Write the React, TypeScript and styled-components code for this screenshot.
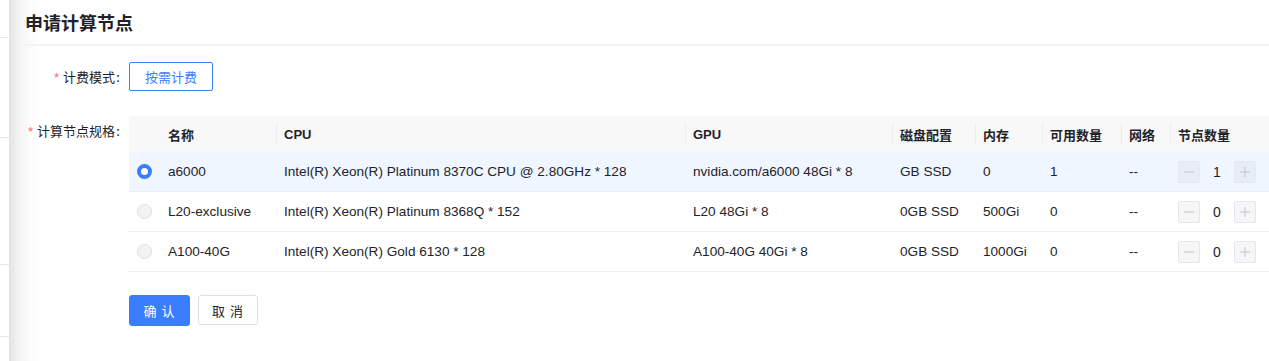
import React from 'react'
import styled, { createGlobalStyle } from 'styled-components';

const GlobalStyle = createGlobalStyle`
  html, body {
    margin: 0;
    padding: 0;
    background: #fff;
  }
  body {
    font-family: "Liberation Sans", "Noto Sans CJK SC", sans-serif;
    font-size: 13px;
    color: #1f2329;
  }
`;

const COLS = '31px 116px 409px 207px 83px 67px 79px 49px 99px';

const Screen = styled.div`
  display: flex;
  width: 1269px;
  height: 361px;
  overflow: hidden;
`;

const BackPage = styled.div`
  width: 9px;
  flex-shrink: 0;
  display: flex;
  flex-direction: column;
  background: #fff;
`;

const BackLine = styled.div<{ $h: number }>`
  height: ${p => p.$h}px;
  box-sizing: border-box;
  border-bottom: 1px solid #e6e6e6;
`;

const Drawer = styled.div`
  flex: 1;
  min-width: 0;
  padding-left: 16px;
  background: linear-gradient(to right, #e3e3e3 0px, #f1f1f1 8px, #fbfbfb 20px, #fff 32px);
  display: flex;
  flex-direction: column;
`;

const Header = styled.div`
  height: 44px;
  display: flex;
  align-items: center;
  border-bottom: 2px solid #f2f3f5;
`;

const Title = styled.h2`
  margin: 0;
  font-family: "Noto Sans CJK SC", sans-serif;
  font-size: 18px;
  font-weight: 700;
  color: #1f2329;
`;

const Form = styled.div`
  padding-top: 16px;
  display: flex;
  flex-direction: column;
`;

const FormRow = styled.div<{ $gap?: number }>`
  display: flex;
  align-items: flex-start;
  margin-bottom: ${p => p.$gap ?? 0}px;
`;

const Label = styled.div`
  width: 104px;
  flex-shrink: 0;
  box-sizing: border-box;
  padding-right: 8px;
  text-align: right;
  line-height: 29px;
  font-family: "Noto Sans CJK SC", sans-serif;
  font-size: 13px;
  color: #1f2329;
  white-space: nowrap;
`;

const Star = styled.span`
  font-family: "Liberation Sans", sans-serif;
  color: #f56c6c;
  margin-right: 4px;
`;

const Colon = styled.span`
  display: inline-block;
  width: 6px;
  text-align: center;
`;

const ModeButton = styled.button`
  height: 29px;
  width: 84px;
  border: 1px solid #3a7dff;
  border-radius: 2px;
  background: #fff;
  color: #3a7dff;
  font-family: "Noto Sans CJK SC", sans-serif;
  font-size: 13px;
  padding: 0;
`;

const Table = styled.div`
  width: 1140px;
  flex-shrink: 0;
`;

const HeadRow = styled.div`
  display: grid;
  grid-template-columns: ${COLS};
  height: 36px;
  background: #f8f8f9;
`;

const HeadCell = styled.div<{ $sep?: boolean }>`
  position: relative;
  display: flex;
  align-items: center;
  padding-left: 8px;
  font-family: "Liberation Sans", "Noto Sans CJK SC", sans-serif;
  font-weight: 700;
  font-size: 13px;
  color: #1f2329;
  white-space: nowrap;

  &::before {
    content: '';
    display: ${p => (p.$sep ? 'block' : 'none')};
    position: absolute;
    left: 0;
    top: 7px;
    height: 22px;
    width: 1px;
    background: #ededed;
  }
`;

const BodyRow = styled.div<{ $selected?: boolean }>`
  display: grid;
  grid-template-columns: ${COLS};
  height: 40px;
  box-sizing: border-box;
  border-bottom: 1px solid #ebeef5;
  background: ${p => (p.$selected ? '#f0f6ff' : '#fff')};
`;

const Cell = styled.div`
  display: flex;
  align-items: center;
  padding-left: 8px;
  font-size: 13.6px;
  color: #1f2329;
  white-space: nowrap;
  overflow: hidden;
`;

const Radio = styled.span<{ $checked?: boolean }>`
  width: 15px;
  height: 15px;
  box-sizing: border-box;
  border-radius: 50%;
  border: ${p => (p.$checked ? '4.5px solid #3a7dff' : '1px solid #dcdfe6')};
  background: ${p => (p.$checked ? '#fff' : '#f2f3f5')};
`;

const Stepper = styled.div`
  display: flex;
  align-items: center;
`;

const StepBtn = styled.span`
  width: 22px;
  height: 22px;
  box-sizing: border-box;
  border: 1px solid #e4e7ed;
  border-radius: 2px;
  background: rgba(0, 0, 0, 0.035);
  display: flex;
  align-items: center;
  justify-content: center;
  color: #c0c4cc;
`;

const StepValue = styled.span`
  width: 34px;
  text-align: center;
  font-size: 14px;
  color: #1f2329;
`;

const Footer = styled.div`
  display: flex;
  gap: 8px;
  margin-top: 23px;
  padding-left: 104px;
`;

const Button = styled.button<{ $primary?: boolean }>`
  height: ${p => (p.$primary ? 31 : 30)}px;
  width: ${p => (p.$primary ? 61 : 60)}px;
  padding: 0;
  border-radius: 3px;
  border: 1px solid ${p => (p.$primary ? '#3a7dff' : '#dcdfe6')};
  background: ${p => (p.$primary ? '#3a7dff' : '#fff')};
  color: ${p => (p.$primary ? '#fff' : '#1f2329')};
  font-family: "Noto Sans CJK SC", sans-serif;
  font-size: 13px;
  letter-spacing: 1px;
`;

const Minus = () => (
  <svg width="12" height="12" viewBox="0 0 12 12">
    <path d="M1 6h10" stroke="currentColor" strokeWidth="1" />
  </svg>
);

const Plus = () => (
  <svg width="12" height="12" viewBox="0 0 12 12">
    <path d="M1 6h10M6 1v10" stroke="currentColor" strokeWidth="1" />
  </svg>
);

type Spec = {
  name: string;
  cpu: string;
  gpu: string;
  disk: string;
  mem: string;
  avail: string;
  count: number;
};

const specs: Spec[] = [
  { name: 'a6000', cpu: 'Intel(R) Xeon(R) Platinum 8370C CPU @ 2.80GHz * 128', gpu: 'nvidia.com/a6000 48Gi * 8', disk: 'GB SSD', mem: '0', avail: '1', count: 1 },
  { name: 'L20-exclusive', cpu: 'Intel(R) Xeon(R) Platinum 8368Q * 152', gpu: 'L20 48Gi * 8', disk: '0GB SSD', mem: '500Gi', avail: '0', count: 0 },
  { name: 'A100-40G', cpu: 'Intel(R) Xeon(R) Gold 6130 * 128', gpu: 'A100-40G 40Gi * 8', disk: '0GB SSD', mem: '1000Gi', avail: '0', count: 0 },
];

const headers = ['', '名称', 'CPU', 'GPU', '磁盘配置', '内存', '可用数量', '网络', '节点数量'];

const App: React.FC = () => {
  return (
    <>
      <GlobalStyle />
      <Screen>
        <BackPage>
          <BackLine $h={38} />
          <BackLine $h={100} />
          <BackLine $h={127} />
          <BackLine $h={72} />
        </BackPage>
        <Drawer>
          <Header>
            <Title>申请计算节点</Title>
          </Header>
          <Form>
            <FormRow $gap={24}>
              <Label><Star>*</Star>计费模式<Colon>:</Colon></Label>
              <ModeButton>按需计费</ModeButton>
            </FormRow>
            <FormRow>
              <Label><Star>*</Star>计算节点规格<Colon>:</Colon></Label>
              <Table>
                <HeadRow>
                  {headers.map((h, i) => (
                    <HeadCell key={i} $sep={i > 1}>{h}</HeadCell>
                  ))}
                </HeadRow>
                {specs.map((s, i) => (
                  <BodyRow key={s.name} $selected={i === 0}>
                    <Cell><Radio $checked={i === 0} /></Cell>
                    <Cell>{s.name}</Cell>
                    <Cell>{s.cpu}</Cell>
                    <Cell>{s.gpu}</Cell>
                    <Cell>{s.disk}</Cell>
                    <Cell>{s.mem}</Cell>
                    <Cell>{s.avail}</Cell>
                    <Cell>--</Cell>
                    <Cell>
                      <Stepper>
                        <StepBtn><Minus /></StepBtn>
                        <StepValue>{s.count}</StepValue>
                        <StepBtn><Plus /></StepBtn>
                      </Stepper>
                    </Cell>
                  </BodyRow>
                ))}
              </Table>
            </FormRow>
            <Footer>
              <Button $primary>确 认</Button>
              <Button>取 消</Button>
            </Footer>
          </Form>
        </Drawer>
      </Screen>
    </>
  )
};

export default App;
